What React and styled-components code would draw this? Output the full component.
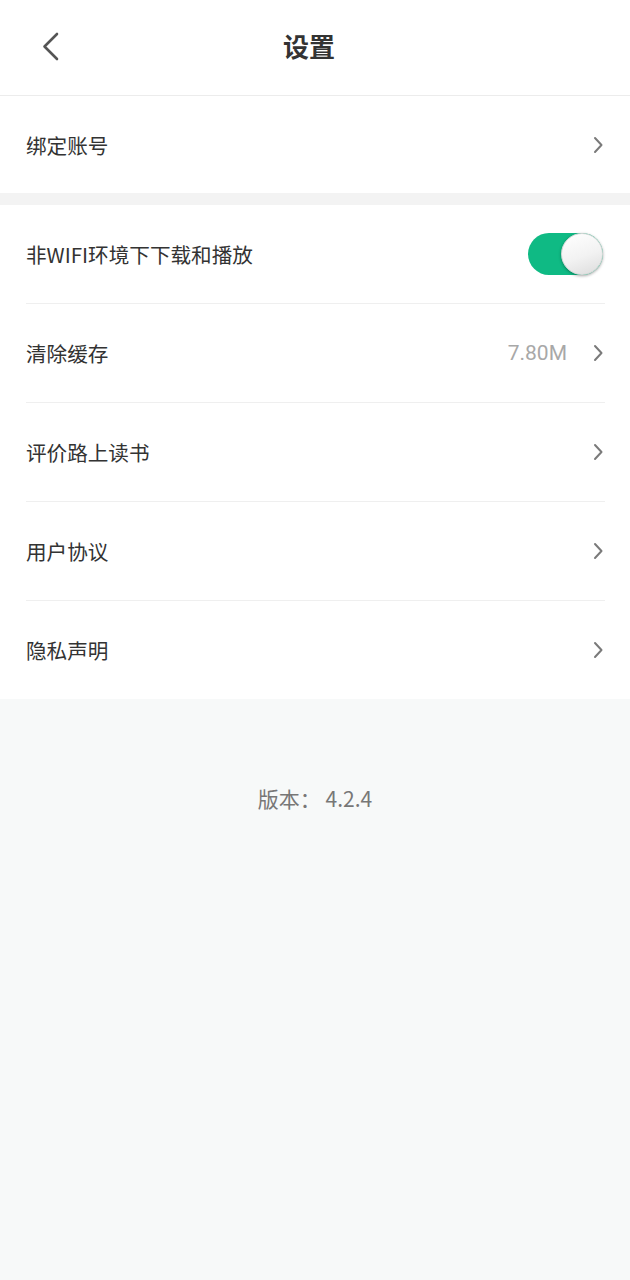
import React from "react";
import styled, { createGlobalStyle } from "styled-components";

const Global = createGlobalStyle`
  html, body { margin: 0; padding: 0; }
  body {
    background: #f7f9f9;
    font-family: "Noto Sans CJK SC", "Noto Sans", Roboto, sans-serif;
    -webkit-font-smoothing: antialiased;
  }
`;

const Page = styled.div`
  width: 630px;
  min-height: 1280px;
  background: #f7f9f9;
  display: flex;
  flex-direction: column;
`;

const Header = styled.header`
  height: 95px;
  background: #fff;
  border-bottom: 1px solid #ececec;
  display: grid;
  grid-template-columns: 80px 1fr 80px;
  align-items: center;
`;

const BackButton = styled.button`
  border: 0;
  background: none;
  padding: 0 0 4px 41px;
  height: 95px;
  display: flex;
  align-items: center;
  cursor: pointer;
`;

const Title = styled.h1`
  margin: 0 0 5px;
  text-align: center;
  font-size: 26px;
  font-weight: 700;
  color: #333;
  padding-right: 12px;
`;

const Section = styled.section`
  background: #fff;
  padding: 0 25px 0 26px;
  display: flex;
  flex-direction: column;
`;

const Gap = styled.div`
  height: 12px;
  background: #f3f3f3;
`;

const Row = styled.div`
  height: ${(p) => p.$h}px;
  display: flex;
  align-items: center;
  border-top: ${(p) => (p.$divider ? "1px solid #efefef" : "none")};
  box-sizing: border-box;
`;

const Label = styled.span`
  flex: 1;
  font-size: 20.6px;
  color: #333;
`;

const Value = styled.span`
  font-family: Roboto, "Noto Sans", sans-serif;
  font-size: 21px;
  color: #a8a8a8;
  margin-right: 25px;
`;

const Track = styled.div`
  width: 75px;
  height: 42px;
  border-radius: 21px;
  background: #0fba84;
  position: relative;
  margin-right: 2px;
`;

const Knob = styled.div`
  position: absolute;
  top: 0;
  right: 0;
  width: 42px;
  height: 42px;
  border-radius: 50%;
  background: linear-gradient(160deg, #ffffff 0%, #f2f2f2 55%, #dcdcdc 100%);
  box-shadow: 0 1px 3px rgba(0, 0, 0, 0.35);
  box-sizing: border-box;
  border: 1px solid #d8d8d8;
`;

const Footer = styled.div`
  padding-top: 84px;
  text-align: center;
  font-size: 21px;
  color: #777;
`;

const Chevron = () => (
  <svg width="12" height="18" viewBox="0 0 12 18" style={{ marginRight: 1 }}>
    <path d="M3 2 L9.5 9 L3 16" fill="none" stroke="#7a7a7a" strokeWidth="2" strokeLinecap="round" strokeLinejoin="round" />
  </svg>
);

const BackIcon = () => (
  <svg width="20" height="30" viewBox="0 0 20 30">
    <path d="M16 3 L3.5 15.5 L16 28" fill="none" stroke="#555" strokeWidth="2.6" strokeLinecap="round" strokeLinejoin="round" />
  </svg>
);

const items = [
  { label: "清除缓存", value: "7.80M" },
  { label: "评价路上读书" },
  { label: "用户协议" },
  { label: "隐私声明" },
];

export default function App() {
  return (
    <>
      <Global />
      <Page>
        <Header>
          <BackButton aria-label="back">
            <BackIcon />
          </BackButton>
          <Title>设置</Title>
          <span />
        </Header>
        <Section>
          <Row $h={97}>
            <Label>绑定账号</Label>
            <Chevron />
          </Row>
        </Section>
        <Gap />
        <Section>
          <Row $h={98}>
            <Label>非WIFI环境下下载和播放</Label>
            <Track>
              <Knob />
            </Track>
          </Row>
          {items.map((it) => (
            <Row key={it.label} $h={99} $divider>
              <Label>{it.label}</Label>
              {it.value && <Value>{it.value}</Value>}
              <Chevron />
            </Row>
          ))}
        </Section>
        <Footer>版本： 4.2.4</Footer>
      </Page>
    </>
  );
}
